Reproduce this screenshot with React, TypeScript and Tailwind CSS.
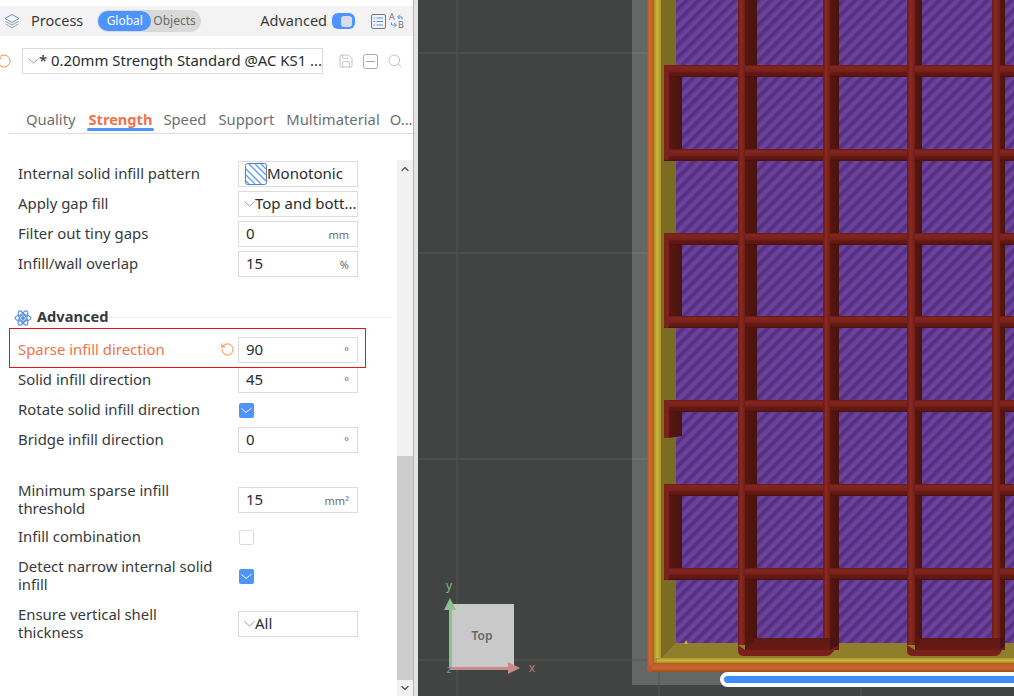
import React from "react";
import { RotateCcw, Save, Search, ChevronDown, ChevronUp } from "lucide-react";

const FONT = "[font-family:'Noto_Sans','Open_Sans',sans-serif]";

function Input({ value, unit }: { value: string; unit?: string }) {
  return (
    <div className="flex h-[26px] w-[120px] shrink-0 items-center justify-between border border-[#dcdcdc] bg-white pl-[7px] pr-[8px] text-[15px] text-[#262e30]">
      <span className="-translate-y-[1px]">{value}</span>
      {unit && <span className="translate-y-[1px] text-[11px] text-[#6b6b6b]">{unit}</span>}
    </div>
  );
}

function Select({ value }: { value: string }) {
  return (
    <div className="flex h-[26px] w-[120px] shrink-0 items-center overflow-hidden border border-[#dcdcdc] bg-white pl-[5px] text-[15px] text-[#262e30] whitespace-nowrap">
      <svg width="11" height="6" viewBox="0 0 11 6" className="shrink-0" fill="none" stroke="#9a9a9a"><path d="M0.5 0.5 5.5 5 10.5 0.5" /></svg>
      <span className="-translate-y-[1px]">{value}</span>
    </div>
  );
}

function Box({ checked }: { checked?: boolean }) {
  return checked ? (
    <div className="ml-px flex h-[15px] w-[15px] items-center justify-center rounded-[2px] bg-[#4d94ff]">
      <svg width="11" height="7" viewBox="0 0 11 7" fill="none" stroke="#fff" strokeWidth="1"><path d="M0.5 1.5 5 5.5 10.5 1" /></svg>
    </div>
  ) : (
    <div className="ml-px h-[15px] w-[15px] rounded-[2px] border border-[#dcdcdc] bg-white" />
  );
}

function Row({ label, children, className = "" }: { label: React.ReactNode; children: React.ReactNode; className?: string }) {
  return (
    <div className={`flex items-center pl-[18px] ${className}`}>
      <div className="w-[220px] shrink-0 -translate-y-[1px] pr-[20px] text-[14.9px] leading-[18px] text-[#363a3c]">{label}</div>
      {children}
    </div>
  );
}

const ribYs = [65, 149, 233, 316, 400, 484, 568];
const ribs = [
  { x: 738, light: 7, end: 757 },
  { x: 823, light: 7, end: 839 },
  { x: 907, light: 8, end: 922 },
  { x: 992, light: 8, end: 1005 },
];

function Viewport() {
  return (
    <svg viewBox="418 0 596 696" className="block h-full w-full">
      <defs>
        <pattern id="stripes" width="8.5" height="8.5" patternUnits="userSpaceOnUse" patternTransform="rotate(45)">
          <rect width="8.5" height="8.5" fill="#6e419f" />
          <rect x="0" width="3.2" height="8.5" fill="#53317f" />
          <rect x="3.2" width="1" height="8.5" fill="#5f388d" />
          <rect x="7.500" width="1" height="8.5" fill="#5f388d" />
        </pattern>
        <linearGradient id="vLight" x1="0" x2="1" y1="0" y2="0">
          <stop offset="0" stopColor="#6a1b17" />
          <stop offset="0.45" stopColor="#8a2a22" />
          <stop offset="1" stopColor="#6f1d18" />
        </linearGradient>
        <linearGradient id="vDark" x1="0" x2="1" y1="0" y2="0">
          <stop offset="0" stopColor="#57170f" />
          <stop offset="1" stopColor="#481310" />
        </linearGradient>
        <linearGradient id="hRib" x1="0" x2="0" y1="0" y2="1">
          <stop offset="0" stopColor="#6a1b17" />
          <stop offset="0.2" stopColor="#83261f" />
          <stop offset="0.55" stopColor="#751f1a" />
          <stop offset="0.62" stopColor="#661a15" />
          <stop offset="0.92" stopColor="#581611" />
          <stop offset="1" stopColor="#3f100c" />
        </linearGradient>
        <linearGradient id="hLow" x1="0" x2="0" y1="0" y2="1">
          <stop offset="0" stopColor="#5f1914" />
          <stop offset="1" stopColor="#681b16" />
        </linearGradient>
        <linearGradient id="wallV" x1="0" x2="1" y1="0" y2="0">
          <stop offset="0" stopColor="#a9521f" />
          <stop offset="0.4" stopColor="#d0682f" />
          <stop offset="1" stopColor="#b85a27" />
        </linearGradient>
        <linearGradient id="wallH" x1="0" x2="0" y1="0" y2="1">
          <stop offset="0" stopColor="#b85a27" />
          <stop offset="0.6" stopColor="#cc652d" />
          <stop offset="1" stopColor="#9c4a1d" />
        </linearGradient>
        <linearGradient id="yelV" x1="0" x2="1" y1="0" y2="0">
          <stop offset="0" stopColor="#a0902c" />
          <stop offset="0.45" stopColor="#d0b83c" />
          <stop offset="1" stopColor="#a8962e" />
        </linearGradient>
        <linearGradient id="yelH" x1="0" x2="0" y1="0" y2="1">
          <stop offset="0" stopColor="#a8962e" />
          <stop offset="0.5" stopColor="#cdb53b" />
          <stop offset="1" stopColor="#9c8b2a" />
        </linearGradient>
      </defs>
      <rect x="418" y="0" width="596" height="696" fill="#424443" />
      <rect x="632" y="0" width="382" height="685" fill="#656766" />
      <g stroke="#555756" strokeWidth="1">
        <path d="M418 53H632M418 253H632M418 459H632M418 660H1014" />
        <path d="M457 0V696" />
        <path d="M659 672V696M861 685V696" />
      </g>
      <path d="M632 53H648M632 253H648M632 459H648" stroke="#767877" />

      {/* outer walls */}
      <rect x="647" y="-10" width="400" height="682" rx="4" fill="#b85a27" />
      <rect x="647" y="-10" width="7" height="676" fill="url(#wallV)" />
      <rect x="652" y="663" width="362" height="9" fill="url(#wallH)" />
      <rect x="654" y="-10" width="400" height="673" rx="2" fill="#a8962e" />
      <rect x="654" y="-10" width="7" height="668" fill="url(#yelV)" />
      <rect x="657" y="658" width="357" height="5" fill="url(#yelH)" />
      <rect x="661" y="-10" width="400" height="668" fill="#7a6d23" />
      <path d="M661 658 L676 643 H1014 V658 Z" fill="#8f7f2c" />
      <rect x="676" y="-10" width="400" height="653" fill="url(#stripes)" />

      {/* vertical ribs */}
      {ribs.map((r) => (
        <g key={r.x}>
          <rect x={r.x + r.light} y="-5" width={r.end - r.x - r.light} height="643" fill="url(#vDark)" />
          <rect x={r.x} y="-5" width={r.light} height="650" fill="url(#vLight)" />
        </g>
      ))}
      {/* horizontal ribs */}
      {ribYs.map((y) => (
        <rect key={y} x={664} y={y} width="350" height="12" fill="url(#hRib)" />
      ))}
      {/* vertical highlight runs through each crossing */}
      {ribs.flatMap((r) => ribYs.map((y) => <rect key={`${r.x}-${y}`} x={r.x} y={y} width={r.light} height="12" fill="url(#vLight)" />))}

      {/* left walls */}
      <g>
        <rect x="669" y="77" width="13" height="72" fill="url(#vDark)" />
        <rect x="664" y="65" width="5" height="95" rx="2" fill="#7d211d" />
        <rect x="669" y="245" width="13" height="71" fill="url(#vDark)" />
        <rect x="664" y="233" width="5" height="95" rx="2" fill="#7d211d" />
        <path d="M669 412H682V436L669 438Z" fill="url(#vDark)" />
        <rect x="664" y="400" width="5" height="38" rx="1" fill="#7d211d" />
        <rect x="669" y="496" width="13" height="72" fill="url(#vDark)" />
        <rect x="664" y="484" width="5" height="96" rx="2" fill="#7d211d" />
      </g>

      {/* bottom U shapes */}
      <g>
        <rect x="745" y="638" width="94" height="12" fill="url(#hLow)" />
        <path d="M745 638L757 638L745 650Z" fill="#57170f" />
        <path d="M738 640V650Q738 656 744 656H826Q830 656 833 652L839 645V638L830 650H745L738 645Z" fill="#7a201b" />
        <path d="M830 638H839V645L830 650Z" fill="#481310" />
      </g>
      <g>
        <rect x="915" y="638" width="90" height="12" fill="url(#hLow)" />
        <path d="M915 638L922 638L915 650Z" fill="#57170f" />
        <path d="M907 640V650Q907 656 913 656H995Q999 656 1001 652L1005 645V638L1000 650H915L907 645Z" fill="#7a201b" />
        <path d="M1000 638H1005V645L1000 650Z" fill="#481310" />
      </g>
      <path d="M684 644 L686 640 L688 644Z" fill="#c9b23a" />

      {/* gizmo */}
      <rect x="451" y="604" width="63" height="64" fill="#c9c9c9" />
      <text x="482" y="640" textAnchor="middle" fontSize="12" fontWeight="600" fill="#666" fontFamily="Noto Sans">Top</text>
      <path d="M450.5 668V608" stroke="#8bc48b" strokeWidth="3" />
      <path d="M444 610L450 598L456 610Z" fill="#8bc48b" />
      <path d="M450 668.500H510" stroke="#c98a8a" strokeWidth="3" />
      <path d="M508 662L520 668L508 674Z" fill="#c98a8a" />
      <text x="449" y="590" textAnchor="middle" fontSize="12" fill="#7fb87f" fontFamily="Noto Sans">y</text>
      <text x="532" y="672" textAnchor="middle" fontSize="12" fill="#bb7c7c" fontFamily="Noto Sans">x</text>
      <text x="449" y="673" textAnchor="middle" fontSize="10" fill="#7c86bb" fontFamily="Noto Sans">z</text>
    </svg>
  );
}

export default function App() {
  return (
    <div className={`flex h-[696px] w-[1014px] overflow-hidden bg-white ${FONT}`}>
      <div className="relative flex w-[413px] shrink-0 flex-col bg-white">
        {/* header */}
        <div className="mt-[6px] flex h-[30px] w-[413px] shrink-0 items-center bg-[#f3f3f3]">
          <svg width="16" height="16" viewBox="0 0 16 16" className="ml-[4px]" fill="none" strokeLinejoin="round">
            <path d="M8 1.500 15 5.500 8 9.500 1 5.500Z" stroke="#6d93c8" />
            <path d="M1.500 8.500 8 12 14.500 8.500" stroke="#9aa0a8" />
            <path d="M1.500 11 8 14.800 14.500 11" stroke="#9aa0a8" />
          </svg>
          <span className="ml-[11px] text-[14.500px] text-[#3b3b3b]">Process</span>
          <div className="ml-[14px] flex h-[22px] w-[104px] items-center rounded-full bg-[#d9d9d9] text-[12px]">
            <span className="ml-px flex h-[20px] w-[53px] items-center justify-center rounded-full bg-[#4d94ff] text-white">Global</span>
            <span className="ml-[2px] text-[#6b6b6b]">Objects</span>
          </div>
          <span className="ml-[59px] text-[14.500px] text-[#3b3b3b]">Advanced</span>
          <div className="ml-[5px] flex h-[16px] w-[23px] items-center justify-end rounded-[6px] bg-[#4d94ff] pr-[3px]">
            <div className="h-[11px] w-[11px] rounded-[3px] bg-[#d6dde8]" />
          </div>
          <svg width="15" height="15" viewBox="0 0 15 15" className="ml-[16px]" fill="none" stroke="#4d94ff">
            <rect x="0.500" y="0.500" width="14" height="14" rx="1.500" stroke="#777" />
            <path d="M5.500 4H12M5.500 7.500H12M5.500 11H12M2.500 4H4M2.500 7.500H4M2.500 11H4" />
          </svg>
          <svg width="20" height="22" viewBox="0 0 20 22" className="ml-[2px] overflow-visible" fill="none">
            <text x="1" y="10" fontSize="9" fill="#777" fontFamily="Noto Sans">A</text>
            <text x="10" y="18" fontSize="9" fill="#777" fontFamily="Noto Sans">B</text>
            <path d="M14 7H10M12 4.500 9.500 7 12 9M14 7V9.500" stroke="#4d94ff" />
            <path d="M3.500 12.500V15H8M6 13 8.500 15 6 17.500" stroke="#4d94ff" />
          </svg>
        </div>

        {/* preset */}
        <div className="mt-[12px] flex h-[26px] shrink-0 items-center">
          <RotateCcw size={16} strokeWidth={1.300} color="#f58025" className="ml-[-4px] shrink-0" />
          <div className="ml-[10px] flex h-[26px] w-[301px] items-center overflow-hidden whitespace-nowrap border border-[#dcdcdc] pl-[5px] text-[14.900px] text-[#262e30]">
            <svg width="11" height="6" viewBox="0 0 11 6" className="shrink-0" fill="none" stroke="#9a9a9a"><path d="M0.500 0.500 5.500 5 10.500 0.500" /></svg>
            <span className="-translate-y-[1px]">* 0.20mm Strength Standard @AC KS1 ...</span>
          </div>
          <Save size={16} strokeWidth={1} color="#a8a8a8" className="ml-[15px] shrink-0" />
          <svg width="15" height="15" viewBox="0 0 15 15" className="ml-[9px] shrink-0" fill="none" stroke="#a8a8a8">
            <rect x="0.500" y="0.500" width="14" height="14" rx="2" />
            <path d="M3 7.500H12" />
          </svg>
          <Search size={16} strokeWidth={1} color="#a8a8a8" className="ml-[9px] shrink-0" />
        </div>

        {/* tabs */}
        <div className="ml-[9px] mt-[34px] flex h-[26px] shrink-0 items-center overflow-hidden whitespace-nowrap border-b border-[#dcdcdc] pb-[2px] text-[14.800px] text-[#6b7072]">
          <span className="ml-[17px]">Quality</span>
          <span className="relative ml-[13px] text-[14.600px] font-bold text-[#f0734a]">
            Strength
            <span className="absolute bottom-[-1px] left-[-2px] right-[-2px] h-[3px] rounded-full bg-[#4d94ff]" />
          </span>
          <span className="ml-[11px]">Speed</span>
          <span className="ml-[12px]">Support</span>
          <span className="ml-[12px]">Multimaterial</span>
          <span className="ml-[10px]">O...</span>
        </div>

        {/* content */}
        <div className="mt-[26px] flex min-h-0 flex-1">
          <div className="relative w-[397px] shrink-0 pt-px">
            <Row label="Internal solid infill pattern" className="h-[26px]">
              <div className="flex h-[26px] w-[120px] items-center border border-[#dcdcdc] pl-[6px] text-[15px] text-[#262e30]">
                <svg width="22" height="22" viewBox="0 0 22 22" className="shrink-0" fill="none">
                  <rect x="0.500" y="0.500" width="21" height="21" rx="2" fill="#fff" stroke="#5b7fb8" />
                  <path d="M1 6 16 21M1 12 10 21M1 18 4 21M4 1 21 18M10 1 21 12M16 1 21 6" stroke="#5a9aff" strokeWidth="1.300" />
                </svg>
                <span className="-translate-y-[1px]">Monotonic</span>
              </div>
            </Row>
            <Row label="Apply gap fill" className="mt-[4px] h-[26px]"><Select value="Top and bott..." /></Row>
            <Row label="Filter out tiny gaps" className="mt-[4px] h-[26px]"><Input value="0" unit="mm" /></Row>
            <Row label="Infill/wall overlap" className="mt-[4px] h-[26px]"><Input value="15" unit="%" /></Row>

            <div className="mt-[30px] flex h-[22px] items-center pl-[14px]">
              <svg width="18" height="18" viewBox="0 0 18 18" fill="none" stroke="#5a8fe0" strokeWidth="1.200">
                <ellipse cx="9" cy="9" rx="8" ry="3.200" />
                <ellipse cx="9" cy="9" rx="8" ry="3.200" transform="rotate(60 9 9)" />
                <ellipse cx="9" cy="9" rx="8" ry="3.200" transform="rotate(120 9 9)" />
                <circle cx="9" cy="9" r="1.300" fill="#5a8fe0" />
              </svg>
              <span className="ml-[5px] -translate-y-[1px] text-[14.600px] font-bold text-[#363a3c]">Advanced</span>
              <div className="h-px w-[284px] -translate-y-[1px] bg-[#ececec]" />
            </div>

            <Row label={<span className="text-[#f0734a]">Sparse infill direction</span>} className="relative mt-[8px] h-[26px]">
              <RotateCcw size={15} strokeWidth={1.500} color="#f58025" className="absolute left-[220px] top-[5px]" />
              <Input value="90" unit="°" />
            </Row>
            <div className="pointer-events-none absolute left-[9px] top-[168px] h-[40px] w-[357px] border border-[#ee1111]" />
            <Row label="Solid infill direction" className="mt-[4px] h-[26px]"><Input value="45" unit="°" /></Row>
            <Row label="Rotate solid infill direction" className="mt-[4px] h-[26px]"><Box checked /></Row>
            <Row label="Bridge infill direction" className="mt-[4px] h-[26px]"><Input value="0" unit="°" /></Row>
            <Row label="Minimum sparse infill threshold" className="mt-[29px] h-[36px]"><Input value="15" unit="mm²" /></Row>
            <Row label="Infill combination" className="mt-[6px] h-[26px]"><Box /></Row>
            <Row label="Detect narrow internal solid infill" className="mt-[8px] h-[36px]"><Box checked /></Row>
            <Row label="Ensure vertical shell thickness" className="mt-[12px] h-[36px]"><Select value="All" /></Row>
          </div>

          {/* scrollbar */}
          <div className="flex w-[16px] shrink-0 flex-col items-center bg-[#f1f1f1]">
            <div className="flex h-[17px] items-center justify-center"><ChevronUp size={12} strokeWidth={2.500} color="#555" /></div>
            <div className="mt-[279px] h-[224px] w-[16px] bg-[#cdcdcd]" />
            <div className="flex h-[16px] items-center justify-center"><ChevronDown size={12} strokeWidth={2.500} color="#555" /></div>
          </div>
        </div>
      </div>

      <div className="w-px shrink-0 bg-[#b5b5b5]" />
      <div className="w-[4px] shrink-0 bg-[#e3e3e3]" />
      {/* 3D view */}
      <div className="relative min-w-0 flex-1">
        <Viewport />
        <div className="absolute left-[302px] top-[672px] h-[15px] w-[320px] rounded-full border-[4px] border-white bg-[#3f8cff]" />
      </div>
    </div>
  );
}
